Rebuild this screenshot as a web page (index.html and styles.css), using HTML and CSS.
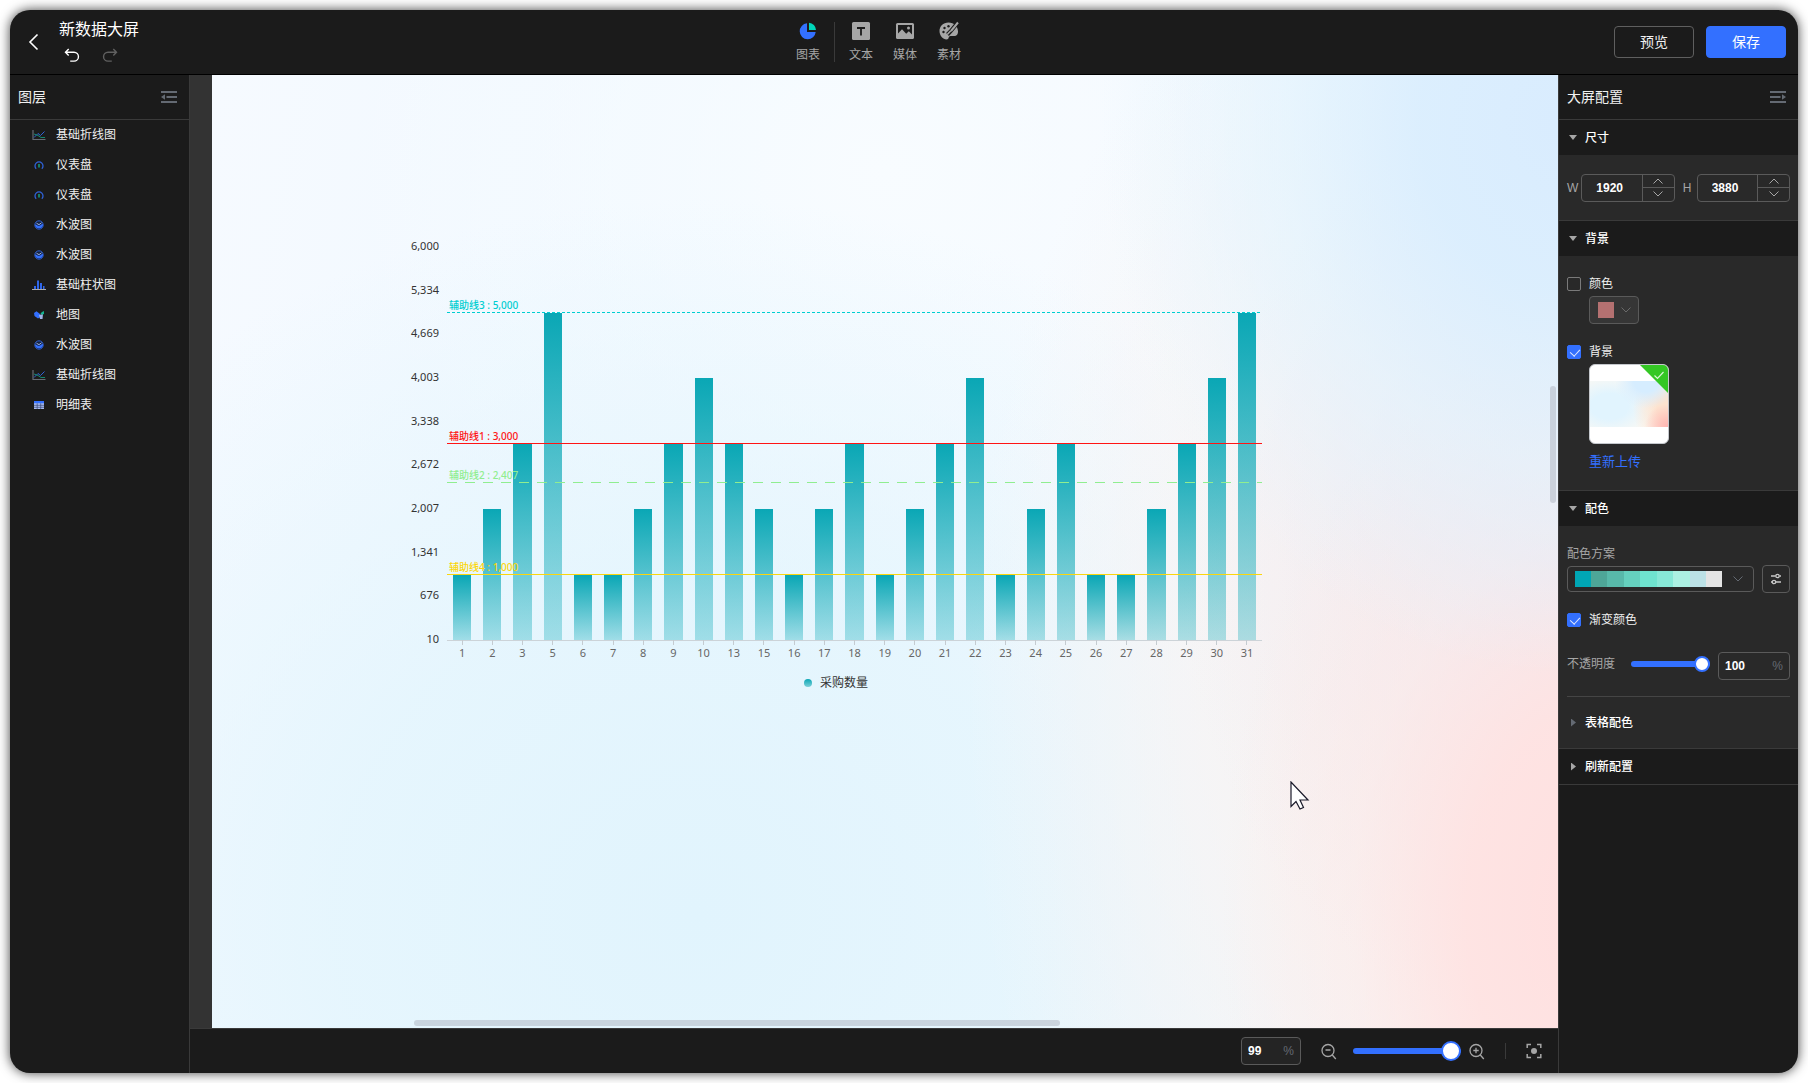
FILE: index.html
```html
<!DOCTYPE html>
<html lang="zh-CN">
<head>
<meta charset="utf-8">
<title>新数据大屏</title>
<link rel="stylesheet" href="styles.css">
</head>
<body>
<svg class="defs" width="0" height="0" aria-hidden="true">
  <symbol id="i-line" viewBox="0 0 14 12"><path d="M1 1v9.500h12.500" fill="none" stroke="#666c75" stroke-width="1.200"/><path d="M2 8.500 6 4.500l2.500 2L12.500 2.500" fill="none" stroke="#2f62d9"/><path d="M2 5l4 1.500L9 8.500h4" fill="none" stroke="#16866f"/></symbol>
  <symbol id="i-gauge" viewBox="0 0 14 12"><path d="M4.200 9.800A4 4 0 1 1 9.800 9.800" fill="none" stroke="#2f62d9" stroke-width="1.300"/><path d="M7 5v3.500" stroke="#13a286" stroke-width="1.500"/></symbol>
  <symbol id="i-water" viewBox="0 0 14 12"><circle cx="7" cy="6" r="4.200" fill="#16233f" stroke="#2f5fd0"/><path d="M3 5.500C4.500 5 5.500 7 7 6.800S9.500 4.800 11 5a4 4 0 1 1-8 .5z" fill="#3370ff"/><path d="M4.500 4.300 7 5.600l2.500-1.800" fill="none" stroke="#a9c3ff" stroke-width=".9"/></symbol>
  <symbol id="i-bar" viewBox="0 0 14 12"><path d="M2 7h2v3H2zM5 1.500h2V10H5zM8 4h2v6H8zM11 7h1.500v3H11z" fill="#2f66ea"/><path d="M0 10.500h14" stroke="#aaa"/></symbol>
  <symbol id="i-map" viewBox="0 0 14 12"><path d="M2 4 4.500 2.300 8 5l.500 3L6 9.500 2.500 7z" fill="#3370ff"/><path d="M7 6l4-1-.500 5L8 10z" fill="#9fb4e8"/><path d="M8.500 4.500 10 3l2-1v3L10 5.800z" fill="#13b38f"/></symbol>
  <symbol id="i-table" viewBox="0 0 14 12"><path d="M2 2h10v8H2z" fill="#a9bcf0"/><path d="M2 2h10v2.300H2z" fill="#3370ff"/><path d="M2 6.300h10M2 8.300h10M5.200 4.300V10M8.700 4.300V10" stroke="#3a4a78" stroke-width=".7"/></symbol>
  <symbol id="i-down" viewBox="0 0 12 8"><path d="M1.500 1.500 6 6l4.500-4.500" fill="none" stroke="currentColor"/></symbol>
  <symbol id="i-up" viewBox="0 0 12 8"><path d="M1.500 6.500 6 2l4.500 4.500" fill="none" stroke="currentColor"/></symbol>
</svg>

<div class="app">
  <header class="topbar">
    <div class="topbar-left">
      <button class="icon-btn back" aria-label="返回"><svg width="12" height="18" viewBox="0 0 12 18"><path d="M9.500 1.500 2 9l7.500 7.500" fill="none" stroke="#fff" stroke-width="1.600"/></svg></button>
      <div class="title-block">
        <h1 class="title">新数据大屏</h1>
        <div class="history">
          <button class="icon-btn" aria-label="撤销"><svg width="16" height="15" viewBox="0 0 16 15"><path d="M4.700 1 1.500 4.200l3.200 3.200M1.500 4.200H10a4.400 4.400 0 0 1 0 8.900H6.200" fill="none" stroke="#fff" stroke-width="1.400"/></svg></button>
          <button class="icon-btn" aria-label="重做"><svg width="16" height="15" viewBox="0 0 16 15"><path d="M11.300 1l3.200 3.200-3.200 3.200M14.500 4.200H6a4.400 4.400 0 0 0 0 8.900h3.800" fill="none" stroke="#606060" stroke-width="1.400"/></svg></button>
        </div>
      </div>
    </div>
    <nav class="tools">
      <button class="tool"><svg width="20" height="20" viewBox="0 0 20 20"><path d="M9 2.300A8 8 0 1 0 17.700 11H9z" fill="#3370ff"/><path d="M11 1.800A7.600 7.600 0 0 1 18 9h-7z" fill="#00d6b9"/></svg>图表</button>
      <span class="tools-divider"></span>
      <button class="tool"><svg width="20" height="20" viewBox="0 0 20 20"><rect x="1" y="1" width="18" height="18" rx="1.500" fill="#a6a6a6"/><path d="M6 7h8M10 7v7.500" stroke="#1b1b1b" stroke-width="1.800"/></svg>文本</button>
      <button class="tool"><svg width="20" height="20" viewBox="0 0 20 20"><rect x="1" y="2" width="18" height="16" rx="1.500" fill="#a6a6a6"/><path d="M3 4h14v9.500l-3.200-3.300-2.600 2.500L7 8.200l-4 4.300z" fill="#1b1b1b"/><circle cx="13.500" cy="7" r="1.500" fill="#a6a6a6"/></svg>媒体</button>
      <button class="tool"><svg width="20" height="20" viewBox="0 0 20 20"><path d="M9.500 1.500C4 1.500.5 5.400.5 10s3.500 8.500 7 8.500c3 0 1.500-3.500 4-3.500h3.500c3 0 4-2 4-4.500 0-5-4-9-9.500-9z" fill="#a6a6a6"/><g fill="#1b1b1b"><circle cx="4.500" cy="11" r="1.200"/><circle cx="5.500" cy="7" r="1.200"/><circle cx="9.500" cy="5.200" r="1.200"/></g><path d="M18.800 1.500 11.500 10.500l-3 3" fill="none" stroke="#1b1b1b" stroke-width="4"/><path d="M19 1.500l-7 8.500" stroke="#a6a6a6" stroke-width="2"/><path d="M11.800 9.800 8.300 13.500" stroke="#a6a6a6" stroke-width="1.600"/></svg>素材</button>
    </nav>
    <div class="actions">
      <button class="btn">预览</button>
      <button class="btn btn-primary">保存</button>
    </div>
  </header>

  <aside class="layers">
    <div class="panel-head">
      <h2 class="panel-title">图层</h2>
      <button class="icon-btn" aria-label="收起图层"><svg width="16" height="14" viewBox="0 0 16 14"><path d="M0 2h16M5.500 7H16M0 12h16" stroke="#646a73" stroke-width="2"/><path d="M0 7l4-2.800v5.600z" fill="#646a73"/></svg></button>
    </div>
    <ul class="layer-list">
      <li class="layer"><svg width="14" height="12"><use href="#i-line"/></svg>基础折线图</li>
      <li class="layer"><svg width="14" height="12"><use href="#i-gauge"/></svg>仪表盘</li>
      <li class="layer"><svg width="14" height="12"><use href="#i-gauge"/></svg>仪表盘</li>
      <li class="layer"><svg width="14" height="12"><use href="#i-water"/></svg>水波图</li>
      <li class="layer"><svg width="14" height="12"><use href="#i-water"/></svg>水波图</li>
      <li class="layer"><svg width="14" height="12"><use href="#i-bar"/></svg>基础柱状图</li>
      <li class="layer"><svg width="14" height="12"><use href="#i-map"/></svg>地图</li>
      <li class="layer"><svg width="14" height="12"><use href="#i-water"/></svg>水波图</li>
      <li class="layer"><svg width="14" height="12"><use href="#i-line"/></svg>基础折线图</li>
      <li class="layer"><svg width="14" height="12"><use href="#i-table"/></svg>明细表</li>
    </ul>
  </aside>

  <main class="stage">
    <div class="artboard">
      <section class="chart">
        <div class="chart-main">
          <div class="y-axis"><span>6,000</span><span>5,334</span><span>4,669</span><span>4,003</span><span>3,338</span><span>2,672</span><span>2,007</span><span>1,341</span><span>676</span><span>10</span></div>
          <div class="plot">
            <div class="bars">
              <i style="--v:1000"></i><i style="--v:2000"></i><i style="--v:3000"></i><i style="--v:5000"></i><i style="--v:1000"></i><i style="--v:1000"></i><i style="--v:2000"></i><i style="--v:3000"></i><i style="--v:4000"></i><i style="--v:3000"></i><i style="--v:2000"></i><i style="--v:1000"></i><i style="--v:2000"></i><i style="--v:3000"></i><i style="--v:1000"></i><i style="--v:2000"></i><i style="--v:3000"></i><i style="--v:4000"></i><i style="--v:1000"></i><i style="--v:2000"></i><i style="--v:3000"></i><i style="--v:1000"></i><i style="--v:1000"></i><i style="--v:2000"></i><i style="--v:3000"></i><i style="--v:4000"></i><i style="--v:5000"></i>
            </div>
            <div class="mark mark-cyan" style="--v:5000">辅助线3 : 5,000</div>
            <div class="mark mark-red" style="--v:3000">辅助线1 : 3,000</div>
            <div class="mark mark-green" style="--v:2407">辅助线2 : 2,407</div>
            <div class="mark mark-yellow" style="--v:1000">辅助线4 : 1,000</div>
            <div class="x-axis"><span>1</span><span>2</span><span>3</span><span>5</span><span>6</span><span>7</span><span>8</span><span>9</span><span>10</span><span>13</span><span>15</span><span>16</span><span>17</span><span>18</span><span>19</span><span>20</span><span>21</span><span>22</span><span>23</span><span>24</span><span>25</span><span>26</span><span>27</span><span>28</span><span>29</span><span>30</span><span>31</span></div>
          </div>
        </div>
        <div class="legend"><span class="legend-dot"></span>采购数量</div>
      </section>
    </div>
    <span class="scroll-y"></span>
    <span class="scroll-x"></span>
    <svg class="cursor" width="20" height="29" viewBox="0 0 20 29"><path d="M1 1v24.500l5-5 4 7.500 3.500-1.500-3.500-7.500h8z" fill="#fff" stroke="#1a1a2a" stroke-width="1.200"/></svg>
  </main>

  <footer class="zoombar">
    <label class="field zoom-field"><input class="field-input" type="text" value="99" aria-label="缩放比例"><span class="unit">%</span></label>
    <button class="icon-btn zoom-out" aria-label="缩小"><svg width="16" height="17" viewBox="0 0 16 17"><g fill="none" stroke="#a6a6a6" stroke-width="1.300"><circle cx="7" cy="7.500" r="6"/><path d="M4.500 7h5M11.300 12l3.500 4"/></g></svg></button>
    <input class="range range-zoom" type="range" min="10" max="100" value="100" aria-label="缩放">
    <button class="icon-btn zoom-in" aria-label="放大"><svg width="16" height="17" viewBox="0 0 16 17"><g fill="none" stroke="#a6a6a6" stroke-width="1.300"><circle cx="7" cy="7.500" r="6"/><path d="M4.300 7.500h5.400M7 4.800v5.400M11.300 12l3.500 4"/></g></svg></button>
    <span class="zoom-divider"></span>
    <button class="icon-btn" aria-label="适应画布"><svg width="16" height="16" viewBox="0 0 16 16"><path d="M1.200 5V1.500H5M11 1.500h3.800V5M14.800 11v3.500H11M5 14.500H1.200V11" fill="none" stroke="#a6a6a6" stroke-width="1.500"/><circle cx="8" cy="8" r="3" fill="#a6a6a6"/></svg></button>
  </footer>

  <aside class="config">
    <div class="panel-head">
      <h2 class="panel-title">大屏配置</h2>
      <button class="icon-btn" aria-label="收起配置"><svg width="16" height="14" viewBox="0 0 16 14"><path d="M0 2h16M0 7h10.500M0 12h16" stroke="#646a73" stroke-width="2"/><path d="M16 7l-4-2.800v5.600z" fill="#646a73"/></svg></button>
    </div>

    <details class="section" open>
      <summary class="section-head">尺寸</summary>
      <div class="section-body size-row">
        <label for="w">W</label>
        <div class="field stepper"><input class="field-input" id="w" type="text" value="1920"><span class="steps"><button aria-label="增加宽度"><svg width="12" height="8"><use href="#i-up"/></svg></button><button aria-label="减少宽度"><svg width="12" height="8"><use href="#i-down"/></svg></button></span></div>
        <label class="label-h" for="h">H</label>
        <div class="field stepper"><input class="field-input" id="h" type="text" value="3880"><span class="steps"><button aria-label="增加高度"><svg width="12" height="8"><use href="#i-up"/></svg></button><button aria-label="减少高度"><svg width="12" height="8"><use href="#i-down"/></svg></button></span></div>
      </div>
    </details>

    <details class="section" open>
      <summary class="section-head">背景</summary>
      <div class="section-body">
        <label class="check"><input type="checkbox">颜色</label>
        <div class="picker color-picker"><select aria-label="背景颜色"><option></option></select><svg width="12" height="8"><use href="#i-down"/></svg></div>
        <label class="check check-bg"><input type="checkbox" checked>背景</label>
        <div class="thumb"><span class="thumb-image"></span><span class="thumb-corner"></span><svg class="thumb-tick" width="12" height="9" viewBox="0 0 12 9"><path d="M1.500 4.500l3 3 6-6.500" fill="none" stroke="#d8f5d4" stroke-width="1.200"/></svg></div>
        <a class="upload" href="#">重新上传</a>
      </div>
    </details>

    <details class="section" open>
      <summary class="section-head">配色</summary>
      <div class="section-body colors-body">
        <label class="caption" for="scheme">配色方案</label>
        <div class="scheme-row">
          <div class="picker scheme-picker"><select id="scheme"><option></option></select><svg width="12" height="8"><use href="#i-down"/></svg></div>
          <button class="adjust" aria-label="自定义配色"><svg width="12" height="12" viewBox="0 0 12 12"><g fill="none" stroke="#c8c8c8" stroke-width="1.300"><path d="M1 3h4.500M9.500 3H11M1 9h1M6 9h5"/><circle cx="7.500" cy="3" r="1.700"/><circle cx="4" cy="9" r="1.700"/></g></svg></button>
        </div>
        <label class="check check-gradient"><input type="checkbox" checked>渐变颜色</label>
        <div class="opacity-row">
          <label for="opacity">不透明度</label>
          <input class="range range-opacity" id="opacity" type="range" value="100">
          <div class="field opacity-field"><input class="field-input" type="text" value="100" aria-label="不透明度"><span class="unit">%</span></div>
        </div>
        <details class="sub">
          <summary class="section-head sub-head">表格配色</summary>
        </details>
      </div>
    </details>

    <details class="section section-closed">
      <summary class="section-head">刷新配置</summary>
    </details>
  </aside>
</div>
</body>
</html>
```

FILE: styles.css
```css
* { box-sizing: border-box; }

body {
  margin: 0;
  padding: 10px;
  min-height: 100vh;
  display: flex;
  background: #fff;
  color: #f0f0f0;
  font: 12px/20px "Liberation Sans", "Noto Sans CJK SC", sans-serif;
}

button, input, select { font: inherit; color: inherit; }
button { padding: 0; border: 0; background: none; cursor: pointer; }
svg { display: block; flex: none; }
.defs { position: absolute; }

.app {
  flex: 1;
  min-width: 0;
  display: grid;
  grid-template: 65px minmax(0, 1fr) 45px / 180px minmax(0, 1fr) 240px;
  grid-template-areas: "top top top" "layers stage config" "layers zoom config";
  background: #1b1b1b;
  border-radius: 20px;
  box-shadow: 0 0 12px rgba(0, 0, 0, .75);
  overflow: hidden;
}

/* Top bar */
.topbar {
  grid-area: top;
  display: flex;
  justify-content: space-between;
  align-items: center;
  padding-right: 12px;
  border-bottom: 1px solid #000;
}
.topbar-left { display: flex; align-items: center; width: 133px; padding-left: 18px; }
.back { width: 12px; }
.title-block { margin-left: 19px; padding-bottom: 4px; }
.title { margin: 0; font-size: 16px; line-height: 24px; font-weight: 400; color: #fff; white-space: nowrap; }
.history { display: flex; gap: 22px; padding: 6px 0 0 5px; }

.tools { display: flex; align-items: center; }
.tool {
  display: flex;
  flex-direction: column;
  align-items: center;
  gap: 4px;
  margin-right: 20px;
  padding-top: 2px;
  color: #a6a6a6;
}
.tool:first-child { margin-right: 14px; }
.tool:last-child { margin-right: 0; }
.tools-divider { width: 1px; height: 40px; margin-right: 14px; background: #3a3a3a; }

.actions { display: flex; gap: 12px; }
.btn { width: 80px; height: 32px; border: 1px solid #5f5f5f; border-radius: 4px; font-size: 14px; }
.btn-primary { border-color: #3370ff; background: #3370ff; color: #fff; }

/* Side panels */
.layers { grid-area: layers; border-right: 1px solid #3a3a3a; }
.config { grid-area: config; border-left: 1px solid #3a3a3a; }
.panel-head {
  display: flex;
  justify-content: space-between;
  align-items: center;
  height: 45px;
  padding: 0 12px 0 8px;
  border-bottom: 1px solid #3a3a3a;
}
.panel-title { margin: 0; font-size: 14px; font-weight: 400; }
.layer-list { margin: 0; padding: 0; list-style: none; }
.layer { display: flex; align-items: center; gap: 10px; height: 30px; padding-left: 22px; }

/* Stage */
.stage { grid-area: stage; position: relative; display: flex; padding-left: 22px; background: #333; overflow: hidden; }
.artboard {
  position: relative;
  flex: 1;
  min-width: 0;
  background:
    radial-gradient(ellipse 34% 58% at 100% 5%, #d9ecfe 0%, #daeefef0 30%, #dff3ff99 60%, #e6f5ff00 100%),
    radial-gradient(ellipse 28% 62% at 103% 88%, #ffdfdf 0%, #ffe2e1e6 35%, #fde9e780 65%, #fbf0ee00 100%),
    radial-gradient(ellipse 28% 48% at 100% 52%, #e9e9f5 0%, #f0e9f0a0 45%, #f6f2f400 100%),
    radial-gradient(ellipse 30% 80% at 86% 66%, #f9f2f0 0%, #f9f4f3b0 45%, #f8f6f700 100%),
    radial-gradient(ellipse 60% 75% at 36% 88%, #e1f4fd 0%, #e3f5fdd0 45%, #e8f6ff00 100%),
    radial-gradient(ellipse 40% 50% at 50% 10%, #f8fcff 0%, #f8fcff00 100%),
    linear-gradient(100deg, #f6faff, #eff8ff 35%, #f4f9ff 60%, #f3f6fa);
}
.scroll-y, .scroll-x { position: absolute; border-radius: 3px; background: #aeb4c080; }
.scroll-y { right: 2px; top: 311px; width: 6px; height: 117px; }
.scroll-x { bottom: 2px; left: 224px; width: 646px; height: 6px; }
.cursor { position: absolute; left: 1100px; top: 706px; }

/* Chart widget */
.chart {
  position: absolute;
  left: 198px;
  top: 165px;
  width: 852px;
  font-family: "Noto Sans", "Noto Sans CJK SC", sans-serif;
  color: #333;
}
.chart-main { display: flex; gap: 8px; height: 405px; }
.y-axis { display: flex; flex-direction: column; justify-content: space-between; width: 29px; font-size: 11px; line-height: 12px; text-align: right; white-space: nowrap; }
.y-axis span { align-self: flex-end; }
.plot { position: relative; flex: 1; height: 394px; margin-top: 7px; border-bottom: 1px solid #ccd3d8; }
.bars { display: flex; align-items: flex-end; height: 100%; }
.bars i {
  flex: 1;
  height: calc((var(--v) - 10) / 5990 * 100%);
  margin: 0 6px;
  background: linear-gradient(#0aa7b5, #00a6b54d);
}
.mark {
  position: absolute;
  left: 0;
  right: 0;
  bottom: calc((var(--v) - 10) / 5990 * 100%);
  padding-left: 2px;
  border-bottom: 1px solid;
  font-size: 10px;
  font-weight: 500;
  line-height: 14px;
}
.mark-cyan { color: #00ced1; border-bottom-style: dashed; }
.mark-red { color: #ff1414; }
.mark-green { color: #90ee90; border-bottom: 0; }
.mark-green::after { content: ""; display: block; height: 1px; margin-left: -2px; background: repeating-linear-gradient(90deg, #90ee90 0 10px, transparent 10px 18px); }
.mark-cyan { border-bottom: 0; }
.mark-cyan::after { content: ""; display: block; height: 1px; margin-left: -2px; background: repeating-linear-gradient(90deg, #00ced1 0 3px, transparent 3px 5px); }
.mark-yellow { color: #fbd60c; }
.x-axis { display: flex; font-size: 11px; line-height: 16px; color: #666; }
.x-axis span { flex: 1; text-align: center; }
.x-axis span::before { content: ""; display: block; width: 1px; height: 5px; margin: 0 auto; background: #c4cbd0; }
.legend { display: flex; justify-content: center; align-items: center; gap: 8px; padding-top: 28px; }
.legend-dot { width: 8px; height: 8px; border-radius: 50%; background: linear-gradient(#0aa7b5, #7dd0d9); }

/* Zoom bar */
.zoombar {
  grid-area: zoom;
  display: flex;
  align-items: center;
  justify-content: flex-end;
  padding-right: 16px;
  border-top: 1px solid #3a3a3a;
}
.zoom-field { width: 60px; margin-right: 20px; }
.zoom-out { margin-right: 16px; }
.zoom-in { margin: 0 20px 0 8px; }
.zoom-divider { width: 1px; height: 16px; margin-right: 20px; background: #3a3a3a; }

/* Form controls */
.field { display: flex; align-items: center; height: 28px; border: 1px solid #5a5a5a; border-radius: 4px; background: #242424; overflow: hidden; }
.field-input { flex: 1; min-width: 0; width: 100%; padding: 0 0 0 6px; border: 0; outline: 0; background: none; font-weight: 700; color: #fff; }
.unit { padding-right: 6px; color: #646a73; }

.stepper { flex: 1; background: none; }
.stepper .field-input { padding-left: 14px; }
.steps { display: flex; flex-direction: column; flex: none; width: 32px; height: 100%; border-left: 1px solid #5a5a5a; color: #a6a6a6; }
.steps button { flex: 1; display: flex; align-items: center; justify-content: center; }
.steps button + button { border-top: 1px solid #5a5a5a; }

.range { appearance: none; height: 20px; margin: 0; background: none; }
.range::-webkit-slider-runnable-track { height: 6px; border-radius: 3px; background: #3370ff; }
.range::-webkit-slider-thumb { appearance: none; width: 16px; height: 16px; margin-top: -5px; border: 2px solid #3370ff; border-radius: 50%; background: #fff; }
.range-zoom { width: 108px; }
.range-zoom::-webkit-slider-thumb { width: 20px; height: 20px; margin-top: -7px; }

.check { display: flex; align-items: center; gap: 8px; }
.check input { appearance: none; width: 14px; height: 14px; margin: 0; border: 1px solid #7a7a7a; border-radius: 2px; }
.check input:checked { border-color: #3370ff; background: #3370ff; }
.check input:checked::before { content: ""; display: block; width: 5px; height: 8px; margin: 1px 0 0 4px; border: solid #dfe8ff; border-width: 0 1px 1px 0; transform: rotate(42deg); }

.picker { position: relative; border: 1px solid #5a5a5a; border-radius: 4px; color: #6a6a6a; }
.picker select { appearance: none; display: block; width: 100%; height: 100%; border: 0; outline: 0; background: none; }
.picker svg { position: absolute; top: 50%; right: 8px; margin-top: -4px; }

/* Config sections */
.section-head {
  display: flex;
  align-items: center;
  gap: 8px;
  height: 35px;
  padding-left: 10px;
  list-style: none;
  color: #fff;
  font-weight: 500;
  cursor: pointer;
}
.section-head::before { content: ""; width: 8px; height: 5px; background: #a6a6a6; clip-path: polygon(0 0, 100% 0, 50% 100%); }
.section-closed > .section-head::before,
.sub-head::before { width: 5px; height: 8px; margin: 0 1px 0 2px; clip-path: polygon(0 0, 100% 50%, 0 100%); }
.section-body { padding: 18px 8px; background: #292929; border-bottom: 1px solid #3a3a3a; }
.section-closed { border-bottom: 1px solid #3a3a3a; }

.size-row { display: flex; align-items: center; gap: 3px; height: 66px; color: #a6a6a6; }
.label-h { margin-left: 5px; width: 11px; }

.color-picker { width: 50px; height: 28px; margin: 2px 0 0 22px; background: #363636; }
.color-picker select { background: linear-gradient(#b47171, #b47171) 8px center / 16px 16px no-repeat; }
.color-picker svg { right: 6px; }
.check-bg { margin-top: 18px; }
.thumb { position: relative; display: flex; align-items: center; width: 80px; height: 80px; margin: 2px 0 8px 22px; border: 1px solid #c4c7cc; border-radius: 6px; background: #fff; overflow: hidden; }
.thumb-image {
  flex: 1;
  height: 46px;
  background:
    radial-gradient(ellipse 40% 60% at 72% 0%, #d6edff 40%, #d6edff00),
    radial-gradient(ellipse 30% 50% at 100% 100%, #ffb3b0, #ffc9c200),
    radial-gradient(ellipse 45% 90% at 100% 60%, #fde3cf 30%, #fde8e000),
    radial-gradient(ellipse 60% 70% at 25% 55%, #e1f4fe 40%, #eaf7ff00),
    #fbf9f4;
}
.thumb-corner { position: absolute; top: 0; right: 0; width: 28px; height: 28px; background: #34c724; clip-path: polygon(0 0, 100% 0, 100% 100%); }
.thumb-tick { position: absolute; top: 6px; right: 3px; }
.upload { display: block; margin-left: 22px; font-size: 13px; color: #3370ff; text-decoration: none; }

.colors-body { padding-bottom: 0; }
.caption { display: block; color: #a6a6a6; }
.scheme-row { display: flex; align-items: center; gap: 8px; margin: 1px 0 17px; }
.scheme-picker { flex: 1; height: 26px; color: #646a73; }
.scheme-picker select {
  background: linear-gradient(90deg, #00a6b5 0 11%, #4ea698 11% 22%, #58b9aa 22% 33%, #65d0be 33% 44%, #6fe3cf 44% 56%, #87e8d7 56% 67%, #acf0e2 67% 78%, #bce1e6 78% 89%, #e4e4e4 89%) 7px center / 147px 16px no-repeat;
}
.scheme-picker svg { right: 9px; }
.adjust { display: flex; align-items: center; justify-content: center; width: 28px; height: 28px; border: 1px solid #5a5a5a; border-radius: 4px; }
.opacity-row { display: flex; align-items: flex-start; gap: 8px; margin: 22px 0 16px; line-height: 24px; color: #a6a6a6; }
.range-opacity { flex: 1; min-width: 0; height: 24px; margin-left: 8px; }
.opacity-field { width: 72px; background: none; }
.sub { border-top: 1px solid #454545; }
.sub-head { height: 51px; padding-left: 2px; }
.sub-head::before { background: #646a73; }
```
